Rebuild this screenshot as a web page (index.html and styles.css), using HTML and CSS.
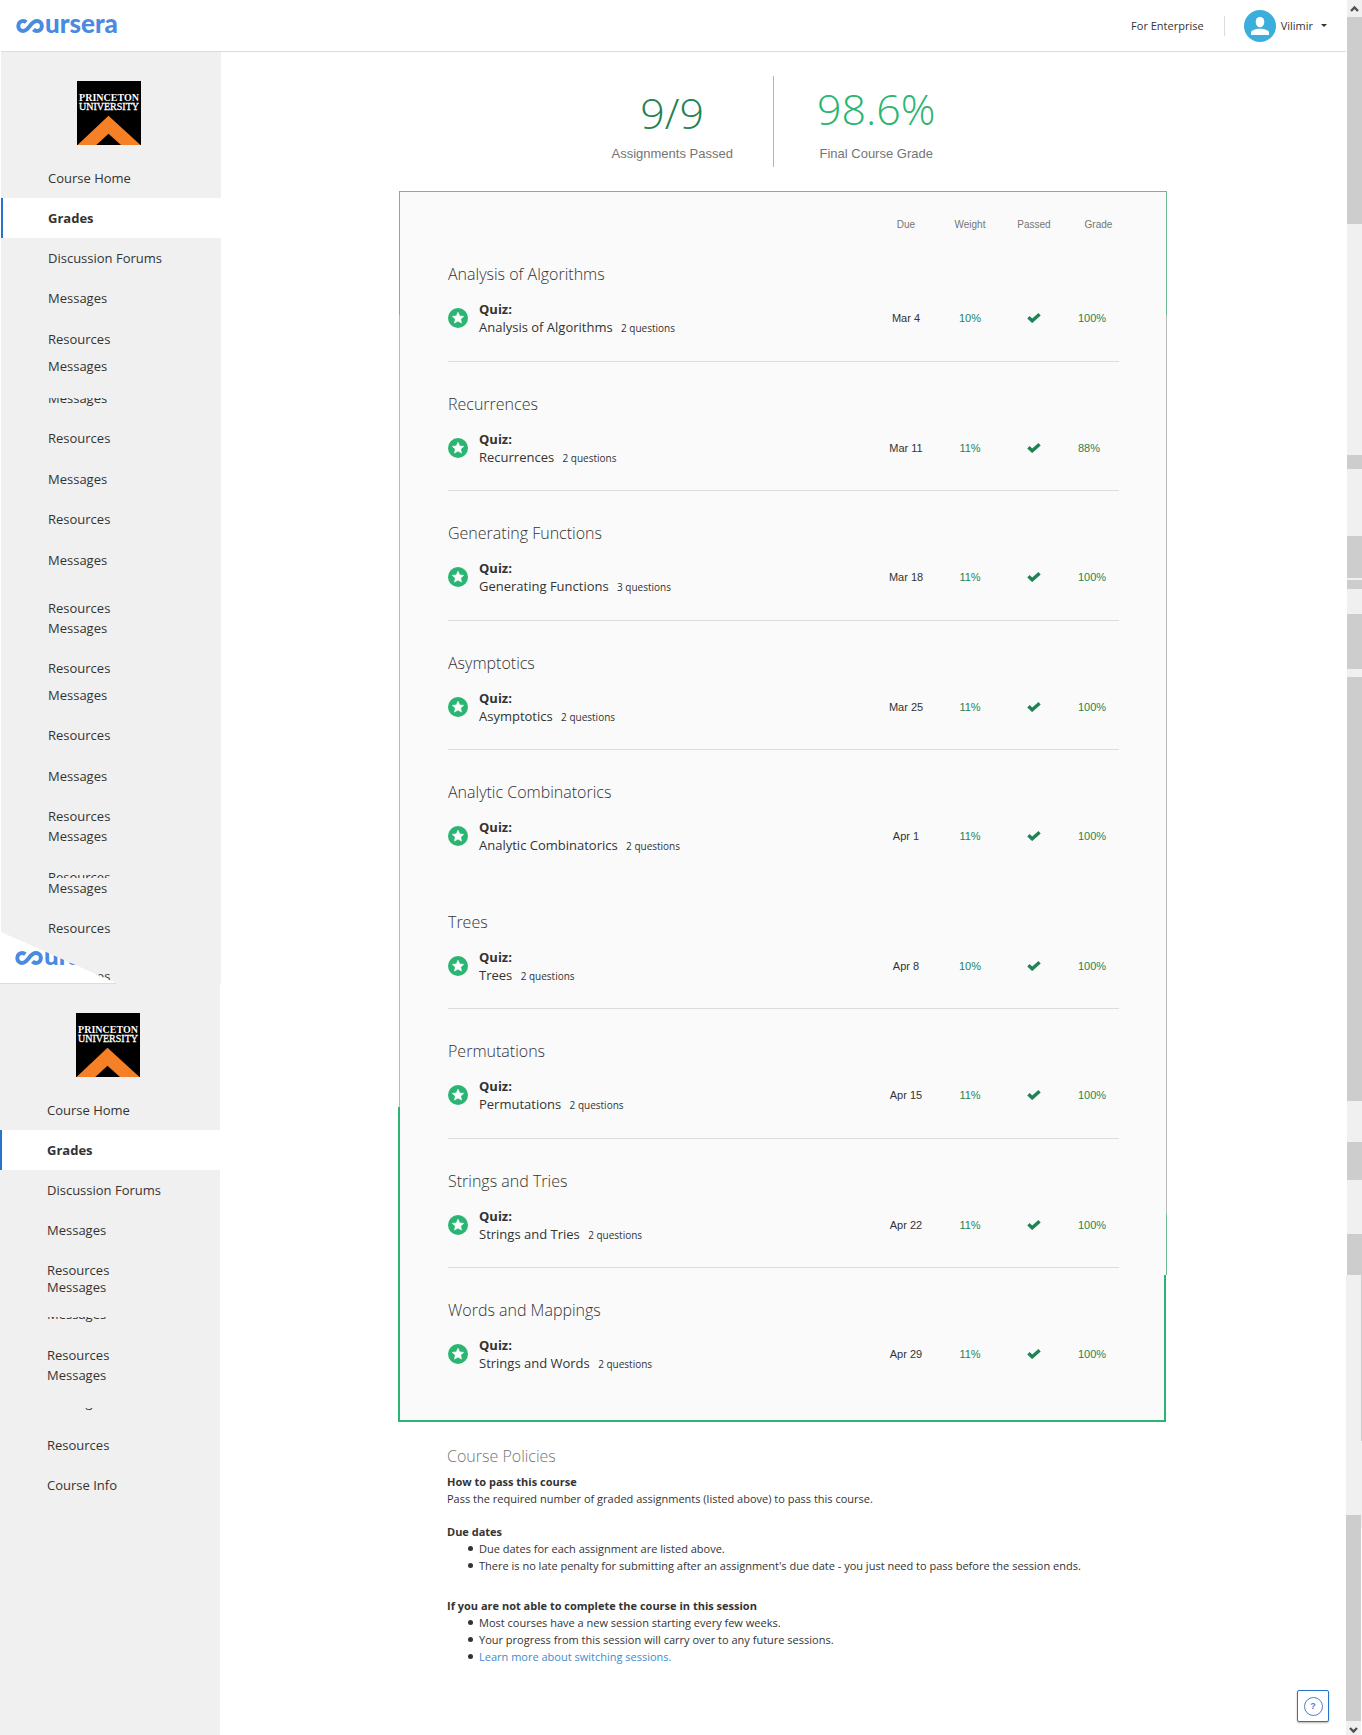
FILE: index.html
```html
<!DOCTYPE html>
<html lang="en">
<head>
<meta charset="utf-8">
<title>Grades | Coursera</title>
<link rel="stylesheet" href="styles.css">
</head>
<body>
<svg class="defs" aria-hidden="true">
  <symbol id="star" viewBox="0 0 20 20">
    <circle cx="10" cy="10" r="10" fill="#2ab573"/>
    <path d="M10 4.2l1.7 3.7 4 .5-3 2.7.8 4-3.5-2-3.5 2 .8-4-3-2.7 4-.5z" fill="#fff" stroke="#fff" stroke-width=".6" stroke-linejoin="round"/>
  </symbol>
  <symbol id="check" viewBox="0 0 14 10">
    <path d="M1.4 4.2L5.2 7.8 12.6 1.3" fill="none" stroke="#1f8354" stroke-width="3.4"/>
  </symbol>
  <symbol id="infinity" viewBox="0 0 29 14">
    <path d="M10.300 3.200C9.400 2.400 8.300 2.100 7.200 2.100A4.900 4.900 0 0 0 7.200 11.900C13 11.900 14.500 2.100 21 2.100A4.900 4.900 0 0 1 21 11.900C19.600 11.900 18.400 11.500 17.400 10.500" fill="none" stroke="#4a8ae0" stroke-width="4"/>
  </symbol>
  <symbol id="princeton" viewBox="0 0 64 64">
    <path d="M0 0h64v64H0z" fill="#000"/>
    <path d="M31.500 34.700L63.500 64H44L31.500 52.700 19.300 64H.5z" fill="#f58025"/>
    <text x="32" y="20" class="crest-text crest-strong">PRINCETON</text>
    <text x="32" y="29" class="crest-text">UNIVERSITY</text>
  </symbol>
</svg>
<div class="window">
  <div class="page">
    <header class="topbar">
      <a class="logo" href="#"><svg class="logo-mark"><use href="#infinity"/></svg><span>ursera</span></a>
      <div class="account">
        <a class="enterprise" href="#">For Enterprise</a>
        <button class="user" type="button">
          <svg class="avatar" viewBox="0 0 32 32"><circle cx="16" cy="16" r="16" fill="#3caedb"/><ellipse cx="16" cy="12" rx="4.300" ry="5.300" fill="#fff"/><path d="M7 25v-2.500c0-2 4-3.800 9-3.800s9 1.800 9 3.800V25z" fill="#fff"/></svg>
          <span>Vilimir</span>
          <span class="caret"></span>
        </button>
      </div>
    </header>
    <div class="body">
      <aside class="sidebar">
        <nav class="panel panel-first">
          <svg class="crest"><use href="#princeton"/></svg>
          <a class="item" href="#"><span>Course Home</span></a>
          <a class="item current" href="#"><span>Grades</span></a>
          <a class="item" href="#"><span>Discussion Forums</span></a>
          <a class="item" href="#"><span>Messages</span></a>
          <a class="item h41" href="#"><span>Resources</span></a>
          <a class="item h27" href="#"><span>Messages</span></a>
          <a class="item h32" href="#"><span class="cut-half">Messages</span></a>
          <a class="item" href="#"><span>Resources</span></a>
          <a class="item h41" href="#"><span>Messages</span></a>
          <a class="item" href="#"><span>Resources</span></a>
          <a class="item h41" href="#"><span>Messages</span></a>
          <a class="item h48" href="#"><span>Resources</span></a>
          <a class="item h20" href="#"><span>Messages</span></a>
          <a class="item" href="#"><span>Resources</span></a>
          <a class="item h27" href="#"><span>Messages</span></a>
          <a class="item" href="#"><span>Resources</span></a>
          <a class="item h41" href="#"><span>Messages</span></a>
          <a class="item" href="#"><span>Resources</span></a>
          <a class="item h20" href="#"><span>Messages</span></a>
          <a class="item h32" href="#"><span class="cut-bottom">Resources</span></a>
          <a class="item h20" href="#"><span>Messages</span></a>
          <a class="item" href="#"><span>Resources</span></a>
          <a class="item h48" href="#"><span>Resources</span></a>
          <div class="corner"><a class="logo" href="#"><svg class="logo-mark"><use href="#infinity"/></svg><span>ursera</span></a></div>
        </nav>
        <nav class="panel panel-second">
          <svg class="crest"><use href="#princeton"/></svg>
          <a class="item" href="#"><span>Course Home</span></a>
          <a class="item current" href="#"><span>Grades</span></a>
          <a class="item" href="#"><span>Discussion Forums</span></a>
          <a class="item" href="#"><span>Messages</span></a>
          <a class="item" href="#"><span>Resources</span></a>
          <a class="item h17" href="#"><span>Messages</span></a>
          <a class="item h27" href="#"><span class="cut-most">Messages</span></a>
          <a class="item h41" href="#"><span>Resources</span></a>
          <a class="item h20" href="#"><span>Messages</span></a>
          <a class="item h27" href="#"><span class="cut-tail">Messages</span></a>
          <a class="item h43" href="#"><span>Resources</span></a>
          <a class="item" href="#"><span>Course Info</span></a>
        </nav>
      </aside>
      <main class="content">
        <section class="summary">
          <div class="stat passed"><strong>9/9</strong><span>Assignments Passed</span></div>
          <div class="stat final"><strong>98.6%</strong><span>Final Course Grade</span></div>
        </section>
        <section class="card">
          <table class="grades">
            <colgroup><col><col class="col-num"><col class="col-num"><col class="col-num"><col class="col-grade"></colgroup>
            <thead><tr><td></td><th scope="col">Due</th><th scope="col">Weight</th><th scope="col">Passed</th><th scope="col" class="grade">Grade</th></tr></thead>
            <tbody>
              <tr class="module"><th colspan="5">Analysis of Algorithms</th></tr>
              <tr class="quiz"><td><div class="task"><svg class="star"><use href="#star"/></svg><div><b>Quiz:</b><p>Analysis of Algorithms <small>2 questions</small></p></div></div></td><td>Mar 4</td><td class="ok">10%</td><td><svg class="check"><use href="#check"/></svg></td><td class="ok grade">100%</td></tr>
            </tbody>
            <tbody>
              <tr class="module"><th colspan="5">Recurrences</th></tr>
              <tr class="quiz"><td><div class="task"><svg class="star"><use href="#star"/></svg><div><b>Quiz:</b><p>Recurrences <small>2 questions</small></p></div></div></td><td>Mar 11</td><td class="ok">11%</td><td><svg class="check"><use href="#check"/></svg></td><td class="ok grade">88%</td></tr>
            </tbody>
            <tbody>
              <tr class="module"><th colspan="5">Generating Functions</th></tr>
              <tr class="quiz"><td><div class="task"><svg class="star"><use href="#star"/></svg><div><b>Quiz:</b><p>Generating Functions <small>3 questions</small></p></div></div></td><td>Mar 18</td><td class="ok">11%</td><td><svg class="check"><use href="#check"/></svg></td><td class="ok grade">100%</td></tr>
            </tbody>
            <tbody>
              <tr class="module"><th colspan="5">Asymptotics</th></tr>
              <tr class="quiz"><td><div class="task"><svg class="star"><use href="#star"/></svg><div><b>Quiz:</b><p>Asymptotics <small>2 questions</small></p></div></div></td><td>Mar 25</td><td class="ok">11%</td><td><svg class="check"><use href="#check"/></svg></td><td class="ok grade">100%</td></tr>
            </tbody>
            <tbody class="no-rule">
              <tr class="module"><th colspan="5">Analytic Combinatorics</th></tr>
              <tr class="quiz"><td><div class="task"><svg class="star"><use href="#star"/></svg><div><b>Quiz:</b><p>Analytic Combinatorics <small>2 questions</small></p></div></div></td><td>Apr 1</td><td class="ok">11%</td><td><svg class="check"><use href="#check"/></svg></td><td class="ok grade">100%</td></tr>
            </tbody>
            <tbody>
              <tr class="module"><th colspan="5">Trees</th></tr>
              <tr class="quiz"><td><div class="task"><svg class="star"><use href="#star"/></svg><div><b>Quiz:</b><p>Trees <small>2 questions</small></p></div></div></td><td>Apr 8</td><td class="ok">10%</td><td><svg class="check"><use href="#check"/></svg></td><td class="ok grade">100%</td></tr>
            </tbody>
            <tbody>
              <tr class="module"><th colspan="5">Permutations</th></tr>
              <tr class="quiz"><td><div class="task"><svg class="star"><use href="#star"/></svg><div><b>Quiz:</b><p>Permutations <small>2 questions</small></p></div></div></td><td>Apr 15</td><td class="ok">11%</td><td><svg class="check"><use href="#check"/></svg></td><td class="ok grade">100%</td></tr>
            </tbody>
            <tbody>
              <tr class="module"><th colspan="5">Strings and Tries</th></tr>
              <tr class="quiz"><td><div class="task"><svg class="star"><use href="#star"/></svg><div><b>Quiz:</b><p>Strings and Tries <small>2 questions</small></p></div></div></td><td>Apr 22</td><td class="ok">11%</td><td><svg class="check"><use href="#check"/></svg></td><td class="ok grade">100%</td></tr>
            </tbody>
            <tbody class="no-rule">
              <tr class="module"><th colspan="5">Words and Mappings</th></tr>
              <tr class="quiz"><td><div class="task"><svg class="star"><use href="#star"/></svg><div><b>Quiz:</b><p>Strings and Words <small>2 questions</small></p></div></div></td><td>Apr 29</td><td class="ok">11%</td><td><svg class="check"><use href="#check"/></svg></td><td class="ok grade">100%</td></tr>
            </tbody>
          </table>
        </section>
        <section class="policies">
          <h2>Course Policies</h2>
          <h3>How to pass this course</h3>
          <p>Pass the required number of graded assignments (listed above) to pass this course.</p>
          <h3 class="spaced">Due dates</h3>
          <ul>
            <li>Due dates for each assignment are listed above.</li>
            <li>There is no late penalty for submitting after an assignment's due date - you just need to pass before the session ends.</li>
          </ul>
          <h3 class="spaced-more">If you are not able to complete the course in this session</h3>
          <ul>
            <li>Most courses have a new session starting every few weeks.</li>
            <li>Your progress from this session will carry over to any future sessions.</li>
            <li><a href="#">Learn more about switching sessions.</a></li>
          </ul>
        </section>
      </main>
    </div>
    <button class="help" type="button" aria-label="Help"><span>?</span></button>
  </div>
  <div class="rail" aria-hidden="true">
    <svg class="arrow" viewBox="0 0 15 17"><path d="M4 11l3.500-3.500L11 11" fill="none" stroke="#505050" stroke-width="2.400"/></svg>
    <i class="dark" style="flex-grow:207"></i>
    <i style="flex-grow:231"></i>
    <i class="dark" style="flex-grow:14"></i>
    <i style="flex-grow:67"></i>
    <i class="dark" style="flex-grow:42"></i>
    <i style="flex-grow:2"></i>
    <i class="dark" style="flex-grow:9"></i>
    <i style="flex-grow:25"></i>
    <i class="dark" style="flex-grow:55"></i>
    <i style="flex-grow:8"></i>
    <i class="dark" style="flex-grow:424"></i>
    <i style="flex-grow:41"></i>
    <i class="dark" style="flex-grow:38"></i>
    <i style="flex-grow:54"></i>
    <i class="dark" style="flex-grow:41"></i>
    <div class="rail-lower" style="flex-grow:460">
      <i style="flex-grow:240"></i>
      <i class="dark" style="flex-grow:206"></i>
      <svg class="arrow arrow-down" viewBox="0 0 15 14"><path d="M4 7l3.500 3.500L11 7" fill="none" stroke="#505050" stroke-width="2.400"/></svg>
    </div>
  </div>
</div>
</body>
</html>
```
FILE: styles.css
```css
* { box-sizing: border-box; }

body {
  margin: 0;
  background: #fff;
  color: #333;
  font-family: "Open Sans", "Noto Sans", sans-serif;
  font-size: 13px;
  line-height: 20px;
}

a { color: inherit; text-decoration: none; }
h2, h3, p, ul { margin: 0; padding: 0; }
button { font: inherit; color: inherit; background: none; border: 0; padding: 0; }
.defs { display: none; }

.window { display: flex; min-height: 100vh; }

.page {
  position: relative;
  flex: 1;
  display: flex;
  flex-direction: column;
  padding: 0 1px;
}

/* Top bar */
.topbar {
  display: flex;
  justify-content: space-between;
  align-items: center;
  height: 52px;
  padding: 0 19px 0 15px;
  border-bottom: 1px solid #dcdcdc;
}

.logo {
  display: flex;
  align-items: center;
  color: #4a8ae0;
  font: 900 26px/20px Lato, "Open Sans", sans-serif;
}
.logo-mark { width: 29px; height: 14px; }
.logo span { padding-bottom: 5px; }

.account { display: flex; align-items: center; font-size: 11px; }
.enterprise { padding-right: 20px; border-right: 1px solid #dcdcdc; margin-right: 19px; }
.user { display: flex; align-items: center; }
.avatar { width: 32px; height: 32px; margin-right: 5px; }
.caret {
  margin-left: 8px;
  border: 3px solid transparent;
  border-top-color: #333;
  border-bottom: 0;
}

.body { flex: 1; display: flex; }

/* Sidebar */
.sidebar { display: flex; flex-direction: column; flex: none; width: 220px; }
.panel { background: #f0f0f0; padding-top: 29px; width: 220px; }
.panel-first { position: relative; height: 932px; }
.panel-second { flex: 1; margin-left: -1px; }
.crest { display: block; width: 64px; height: 64px; margin: 0 0 13px 76px; }
.crest-text {
  font: 10px "Liberation Serif", serif;
  text-anchor: middle;
  fill: #fff;
  stroke: #fff;
  stroke-width: .3px;
}
.crest-strong { font-weight: 700; stroke: none; }

.item {
  display: flex;
  align-items: flex-end;
  height: 40px;
  padding: 0 0 10px 47px;
}
.item span { flex: none; }
.current {
  background: #fff;
  border-left: 2px solid #2a73cc;
  padding-left: 45px;
  font-weight: 700;
}
.h17 { height: 17px; }
.h20 { height: 20px; }
.h27 { height: 27px; }
.h32 { height: 32px; }
.h41 { height: 41px; }
.h43 { height: 43px; }
.h48 { height: 48px; }
.cut-half { clip-path: inset(10px 0 0 0); }
.cut-most { clip-path: inset(13px 0 0 0); }
.cut-tail { clip-path: inset(16px 0 0 0); }
.cut-bottom { height: 11px; overflow: hidden; }

.corner {
  position: absolute;
  left: -1px;
  bottom: 0;
  display: flex;
  width: 120px;
  height: 52px;
  padding-left: 15px;
  background: #fff;
  border-bottom: 1px solid #dcdcdc;
  clip-path: polygon(0 0, 1px 0, 116px 51px, 116px 52px, 0 52px);
}

/* Summary */
.content { flex: 1; padding-right: 2px; }
.summary { display: flex; justify-content: center; padding: 24px 20px 24px 0; }
.stat {
  display: flex;
  flex-direction: column;
  align-items: center;
  height: 91px;
  font: 13px/20px "Liberation Sans", Arial, sans-serif;
  color: #757575;
}
.stat strong { font: 300 43px/60px "Open Sans", sans-serif; }
.passed { padding: 7px 40px 0 2px; border-right: 1px solid #b5b5b5; }
.passed strong { color: #1f8354; padding-bottom: 1px; }
.final { padding: 3px 0 0 43px; }
.final strong { color: #2ab573; padding-bottom: 5px; }

/* Grades card: hairline frame with a heavier accent round the lower part */
.card {
  width: 769px;
  margin: 0 auto;
  padding: 28px 48px 24px 50px;
  background:
    linear-gradient(#2ab573, #2ab573) 0 100% / 768px 2px no-repeat,
    linear-gradient(#2ab573, #2ab573) 0 100% / 2px 315px no-repeat,
    linear-gradient(#2ab573, #2ab573) 766px 100% / 2px 147px no-repeat,
    linear-gradient(#6cb993, #6cb993) 1px 0 / 768px 1px no-repeat,
    linear-gradient(#6cb993 124px, #b9b9b9 124px) 1px 0 / 1px 916px no-repeat,
    linear-gradient(#6cb993 124px, #b9b9b9 124px 1023px, #6cb993 1023px) 768px 0 / 1px 1084px no-repeat,
    linear-gradient(#fafafa, #fafafa) 1px 0 / 767px 100% no-repeat;
}
.grades {
  width: 100%;
  table-layout: fixed;
  border-collapse: collapse;
}
.col-num { width: 64px; }
.col-grade { width: 53px; }
.grades th, .grades td { padding: 0; }
.grades thead th {
  padding-bottom: 1px;
  color: #757575;
  font: 10px/12px "Liberation Sans", Arial, sans-serif;
  text-align: center;
}
.grades thead .grade { padding-left: 12px; }
.grades .module th {
  padding: 30px 0 14px;
  font-size: 16px;
  font-weight: 300;
  line-height: 24px;
  text-align: left;
}
.grades .quiz td {
  padding-bottom: 25px;
  border-bottom: 1px solid #dcdcdc;
  font: 11px/18px "Liberation Sans", Arial, sans-serif;
  text-align: center;
}
.grades tbody:nth-of-type(even) .quiz td { padding-bottom: 24px; }
.grades .no-rule .quiz td { border-color: transparent; }
.grades .quiz .ok { color: #1f8354; }
.grades .quiz .grade { padding-left: 12px; text-align: left; }
.task {
  display: flex;
  align-items: center;
  gap: 11px;
  font: 13px/18px "Open Sans", sans-serif;
  text-align: left;
}
.task b { display: block; }
.task small { margin-left: 5px; font-size: 10px; line-height: 1; }
.star { width: 20px; height: 20px; }
.check { display: block; width: 14px; height: 10px; margin: 0 auto; }

/* Policies */
.policies {
  width: 671px;
  margin: 0 auto;
  padding-top: 22px;
  font-size: 11px;
  line-height: 17px;
}
.policies h2 { color: #757575; font-size: 16px; font-weight: 300; line-height: 24px; margin-bottom: 5px; }
.policies h3 { font-size: 11px; font-weight: 700; }
.policies .spaced { margin-top: 16px; }
.policies .spaced-more { margin-top: 23px; }
.policies ul { list-style: none; padding-left: 21px; }
.policies li { display: flex; align-items: center; gap: 6px; }
.policies li::before {
  content: "";
  width: 5px;
  height: 5px;
  border-radius: 50%;
  background: #333;
}
.policies a { color: #428bca; }

.help {
  position: absolute;
  right: 18px;
  bottom: 13px;
  display: flex;
  align-items: center;
  justify-content: center;
  width: 32px;
  height: 32px;
  background: #fff;
  border: 1px solid #2a73cc;
  border-radius: 2px;
  box-shadow: 0 1px 2px rgba(0, 0, 0, .3);
  color: #4a7fd0;
}
.help span {
  width: 19px;
  height: 19px;
  border: 1px solid #4a7fd0;
  border-radius: 50%;
  font: 700 9px/17px "Liberation Sans", Arial, sans-serif;
  text-align: center;
}

/* Scroll rail */
.rail { display: flex; flex-direction: column; flex: none; width: 15px; }
.rail i { flex: 1 0 0; background: #f0f0f0; }
.rail i.dark { background: #cdcdcd; }
.arrow { flex: none; width: 15px; height: 17px; background: #f0f0f0; }
.arrow-down { height: 14px; }
.rail-lower {
  flex: 1 0 0;
  display: flex;
  flex-direction: column;
  width: 16px;
  margin-left: -1px;
  padding-right: 1px;
  background: linear-gradient(#cdcdcd 36%, #f0f0f0 36% 55%, #fff 55%);
}
```
